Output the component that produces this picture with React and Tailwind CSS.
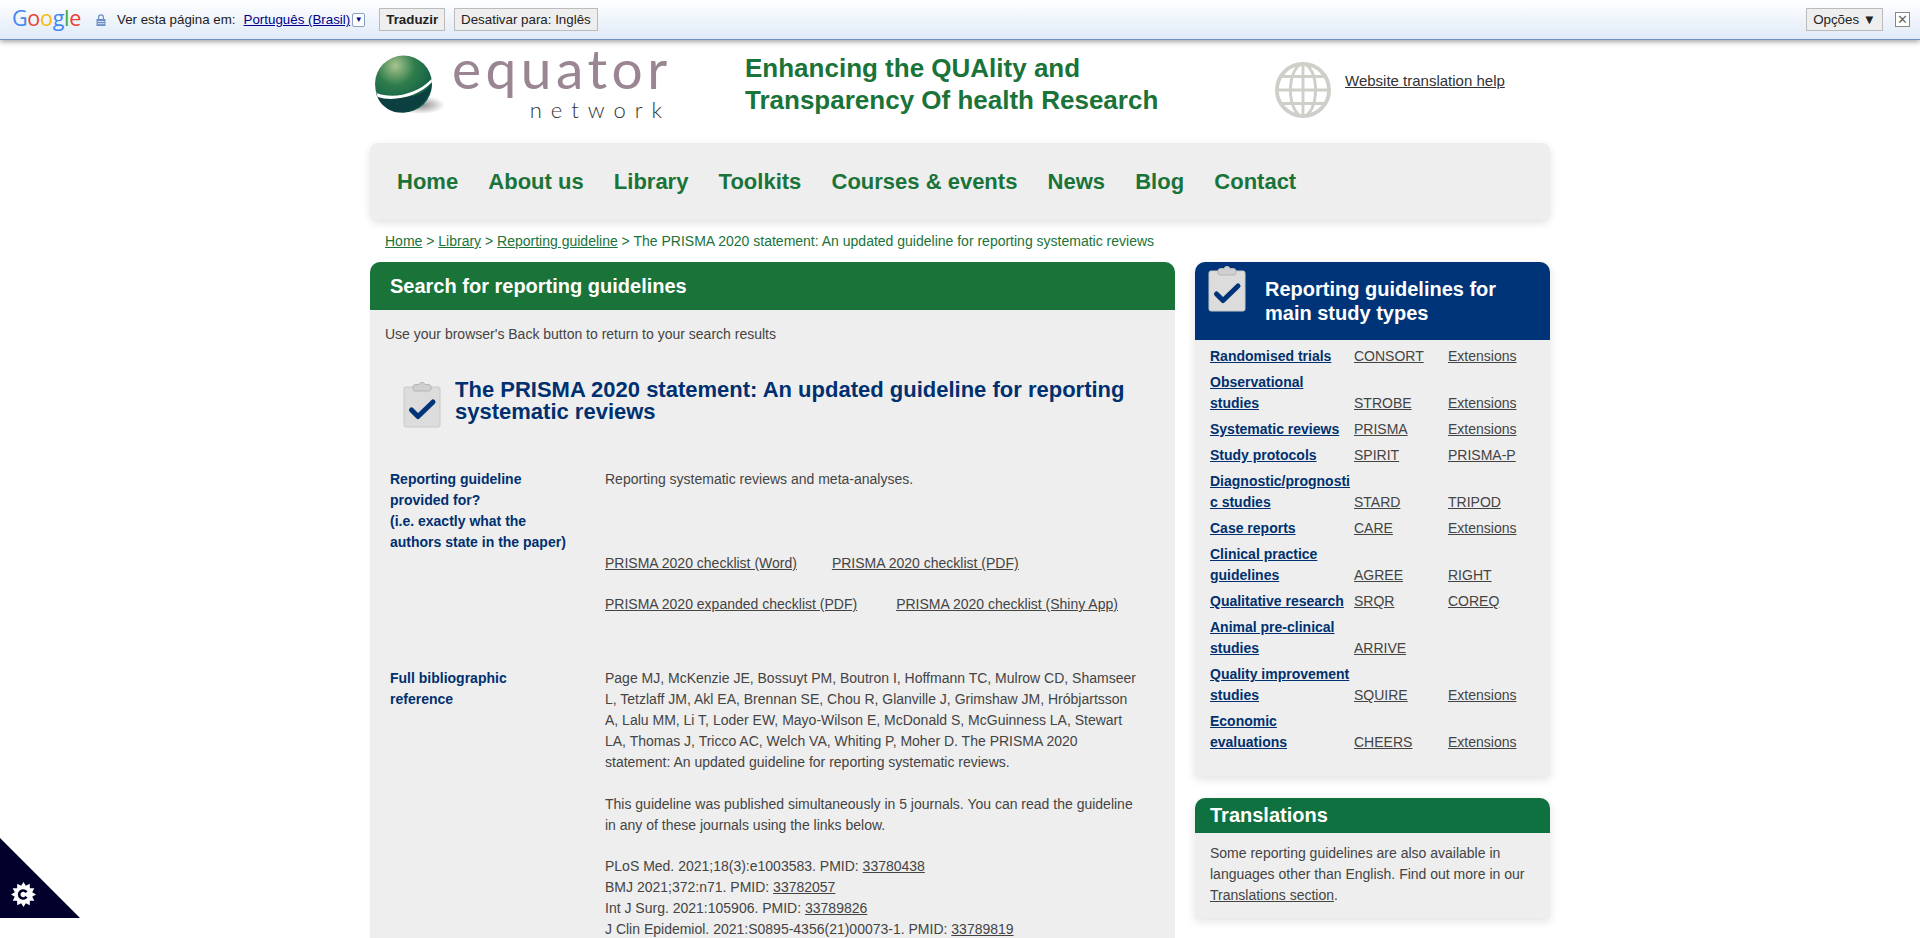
const tipos = [
  { nome: ['Randomised trials'], a: 'CONSORT', b: 'Extensions' },
  { nome: ['Observational', 'studies'], a: 'STROBE', b: 'Extensions' },
  { nome: ['Systematic reviews'], a: 'PRISMA', b: 'Extensions' },
  { nome: ['Study protocols'], a: 'SPIRIT', b: 'PRISMA-P' },
  { nome: ['Diagnostic/prognosti', 'c studies'], a: 'STARD', b: 'TRIPOD' },
  { nome: ['Case reports'], a: 'CARE', b: 'Extensions' },
  { nome: ['Clinical practice', 'guidelines'], a: 'AGREE', b: 'RIGHT' },
  { nome: ['Qualitative research'], a: 'SRQR', b: 'COREQ' },
  { nome: ['Animal pre-clinical', 'studies'], a: 'ARRIVE' },
  { nome: ['Quality improvement', 'studies'], a: 'SQUIRE', b: 'Extensions' },
  { nome: ['Economic', 'evaluations'], a: 'CHEERS', b: 'Extensions' },
]

const menu = ['Home', 'About us', 'Library', 'Toolkits', 'Courses & events', 'News', 'Blog', 'Contact']

function Clipboard({ className, check = '#003478' }) {
  return (
    <svg viewBox="0 0 38 46" className={className}>
      <rect x="1" y="5" width="36" height="40" rx="2" fill="#dcdcdc" stroke="#c9c9c9" />
      <path d="M10 5c0-1.500 1-2.500 3-2.500h3c.5-1.500 1.500-2 3-2s2.500.5 3 2h3c2 0 3 1 3 2.500v2c0 1-1 2-2 2H12c-1 0-2-1-2-2z" fill="#cfcfcf" stroke="#b5b5b5" />
      <path d="M8.500 28l6.500 6.500L30 20" fill="none" stroke={check} strokeWidth="5" strokeLinecap="round" strokeLinejoin="round" />
    </svg>
  )
}

function Globo() {
  return (
    <svg viewBox="0 0 58 58" className="w-[56px] h-[56px]" fill="none" stroke="#cfcfca" strokeWidth="3">
      <circle cx="29" cy="29" r="27" strokeWidth="4" />
      <ellipse cx="29" cy="29" rx="13" ry="27" />
      <path d="M29 2v54M2 29h54M6 15h46M6 43h46" />
    </svg>
  )
}

function Esfera() {
  return (
    <svg viewBox="0 0 72 60" className="w-[72px] h-[60px] shrink-0">
      <defs>
        <radialGradient id="bola" cx="0.36" cy="0.18" r="0.75">
          <stop offset="0" stopColor="#a9c48f" />
          <stop offset="0.45" stopColor="#2f7d4b" />
          <stop offset="1" stopColor="#0d5a48" />
        </radialGradient>
        <radialGradient id="sombra" cx="0.5" cy="0.5" r="0.5">
          <stop offset="0" stopColor="#8a8a8a" />
          <stop offset="1" stopColor="#ffffff" />
        </radialGradient>
      </defs>
      <ellipse cx="46" cy="50" rx="24" ry="9" fill="url(#sombra)" />
      <circle cx="28.500" cy="29" r="28.500" fill="url(#bola)" />
      <path d="M1 38c2 8 8 15 16 18 5 2 13 2 18 0 12-4 20-14 22-27-8 12-30 18-56 9z" fill="#0c3f40" />
      <path d="M1.500 38c16 6 40 2 55-14l.5 3C43 42 19 47 2.500 42z" fill="#ffffff" />
    </svg>
  )
}

function Engrenagem() {
  const pontas = []
  for (let i = 0; i < 24; i++) {
    const r = i % 2 === 0 ? 12.500 : 9
    const ang = (i * Math.PI) / 12
    pontas.push(`${(12.500 + r * Math.cos(ang)).toFixed(2)},${(12.500 + r * Math.sin(ang)).toFixed(2)}`)
  }
  return (
    <svg viewBox="0 0 25 25" className="w-[25px] h-[25px]">
      <polygon points={pontas.join(' ')} fill="#ffffff" />
      <path d="M15.500 10.300a4 4 0 1 0 0 4.400" fill="none" stroke="#00002a" strokeWidth="2.600" />
    </svg>
  )
}

function BarraTradutor() {
  return (
    <div className="h-[40px] flex items-center bg-gradient-to-b from-white to-[#dfeaf7] border-b border-[#6f8fc5] shadow-[0_2px_5px_rgba(0,0,0,0.35)] font-['Liberation_Sans',sans-serif] text-[13.33px] text-[#222] relative z-10">
      <span className="ml-[12px] text-[21.5px] leading-none font-medium tracking-[-0.3px] font-['Open_Sans',sans-serif] w-[70px] -mt-1">
        <span className="text-[#4285f4]">G</span>
        <span className="text-[#ea4335]">o</span>
        <span className="text-[#fbbc05]">o</span>
        <span className="text-[#4285f4]">g</span>
        <span className="text-[#34a853]">l</span>
        <span className="text-[#ea4335]">e</span>
      </span>
      <svg viewBox="0 0 10 12" className="w-[10px] h-[12px] ml-[14px]" fill="#6a8fc8">
        <path d="M2 5V3.200a3 3 0 0 1 6 0V5H6.800V3.200a1.800 1.800 0 0 0-3.600 0V5z" />
        <rect x="0.500" y="5" width="9" height="7" rx="0.500" />
        <path d="M1.500 7.500h7M1.500 9.700h7" stroke="#ffffff" strokeWidth="0.700" />
      </svg>
      <span className="ml-[11px]">Ver esta página em:</span>
      <a className="ml-2 text-[#00008b] underline">Português (Brasil)</a>
      <span className="ml-[2px] w-[13px] h-[14px] border border-[#8aa0c0] rounded-[2px] bg-white text-[#00008b] text-[8px] leading-[12px] text-center">▼</span>
      <button className="ml-[14px] h-[23px] px-[6px] bg-[#eeeeee] border border-[#bbbbbb] font-bold">Traduzir</button>
      <button className="ml-[9px] h-[23px] px-[6px] bg-[#eeeeee] border border-[#bbbbbb]">Desativar para: Inglês</button>
      <button className="ml-auto h-[23px] px-[6px] bg-[#eeeeee] border border-[#bbbbbb]">Opções ▼</button>
      <span className="ml-[12px] mr-[10px] w-[15px] h-[15px] border border-[#888] bg-white text-[#666] text-[13px] leading-[13px] text-center">✕</span>
    </div>
  )
}

function Cabecalho() {
  return (
    <div className="h-[103px] flex">
      <div className="w-[375px] pt-[15px] pl-[5px] flex">
        <Esfera />
        <div className="ml-[5px] -mt-[12px] w-[218px] font-['Lato',sans-serif]">
          <div className="text-[55px] leading-[50px] tracking-[4.500px] text-[#9a8592] whitespace-nowrap">equator</div>
          <div className="text-[22px] leading-[22px] tracking-[9px] text-right font-light text-[#333] mt-[6px] -mr-[1px] whitespace-nowrap">network</div>
        </div>
      </div>
      <div className="w-[530px] pt-[12px] text-[26px] leading-[32px] font-bold text-[#1a7339]">
        Enhancing the QUAlity and<br />Transparency Of health Research
      </div>
      <div className="pt-[22px] flex">
        <Globo />
        <a className="ml-[14px] mt-[9px] text-[15px] leading-[20px] underline text-[#333]">Website translation help</a>
      </div>
    </div>
  )
}

function PainelGuia() {
  return (
    <div className="w-[805px] bg-[#eeeeee] rounded-t-[10px]">
      <div className="h-[48px] bg-[#1a7339] rounded-t-[10px] pl-5 flex items-center text-[20px] font-bold text-white">
        Search for reporting guidelines
      </div>
      <p className="pl-[15px] pt-[14px] leading-[21px]">Use your browser's Back button to return to your search results</p>
      <div className="mt-[34px] pl-[33px] flex items-start">
        <Clipboard className="w-[38px] h-[46px] mt-[3px] shrink-0" />
        <h1 className="ml-[14px] text-[22px] leading-[22px] font-bold text-[#00306f]">
          The PRISMA 2020 statement: An updated guideline for reporting systematic reviews
        </h1>
      </div>
      <div className="mt-[41px] pl-5 flex">
        <div className="w-[215px] shrink-0 font-bold text-[#00306f]">
          Reporting guideline<br />provided for?<br />(i.e. exactly what the<br />authors state in the paper)
        </div>
        <div className="w-[535px]">
          <p>Reporting systematic reviews and meta-analyses.</p>
          <div className="mt-[63px] flex gap-[35px] underline">
            <a>PRISMA 2020 checklist (Word)</a>
            <a>PRISMA 2020 checklist (PDF)</a>
          </div>
          <div className="mt-[20px] flex gap-[39px] underline">
            <a>PRISMA 2020 expanded checklist (PDF)</a>
            <a>PRISMA 2020 checklist (Shiny App)</a>
          </div>
        </div>
      </div>
      <div className="mt-[53px] pl-5 flex">
        <div className="w-[215px] shrink-0 font-bold text-[#00306f]">
          Full bibliographic<br />reference
        </div>
        <div className="w-[535px]">
          <p>Page MJ, McKenzie JE, Bossuyt PM, Boutron I, Hoffmann TC, Mulrow CD, Shamseer L, Tetzlaff JM, Akl EA, Brennan SE, Chou R, Glanville J, Grimshaw JM, Hróbjartsson A, Lalu MM, Li T, Loder EW, Mayo-Wilson E, McDonald S, McGuinness LA, Stewart LA, Thomas J, Tricco AC, Welch VA, Whiting P, Moher D. The PRISMA 2020 statement: An updated guideline for reporting systematic reviews.</p>
          <p className="mt-[21px]">This guideline was published simultaneously in 5 journals. You can read the guideline in any of these journals using the links below.</p>
          <p className="mt-[20px]">PLoS Med. 2021;18(3):e1003583. PMID: <a className="underline">33780438</a></p>
          <p>BMJ 2021;372:n71. PMID: <a className="underline">33782057</a></p>
          <p>Int J Surg. 2021:105906. PMID: <a className="underline">33789826</a></p>
          <p>J Clin Epidemiol. 2021:S0895-4356(21)00073-1. PMID: <a className="underline">33789819</a></p>
        </div>
      </div>
    </div>
  )
}

function Lateral() {
  return (
    <div className="w-[355px]">
      <div className="bg-[#eeeeee] rounded-t-[10px] pb-[23px] shadow-[0_3px_10px_rgba(0,0,0,0.12)]">
        <div className="h-[78px] bg-[#003478] rounded-t-[10px] flex text-white">
          <Clipboard className="w-[38px] h-[46px] ml-[13px] mt-[4px] shrink-0" />
          <div className="ml-[19px] mt-[15px] text-[20px] leading-[24px] font-bold">Reporting guidelines for<br />main study types</div>
        </div>
        <div className="pt-[6px] pl-[15px] grid grid-cols-[144px_94px_auto] gap-y-[5px] items-end">
          {tipos.map(t => (
            <div key={t.nome[0]} className="contents">
              <a className="font-bold text-[#00306f] underline whitespace-nowrap">
                {t.nome.map(n => <div key={n}>{n}</div>)}
              </a>
              <a className="underline">{t.a}</a>
              <a className="underline">{t.b}</a>
            </div>
          ))}
        </div>
      </div>
      <div className="mt-[22px] bg-[#eeeeee] rounded-t-[10px] pb-[12px] shadow-[0_3px_10px_rgba(0,0,0,0.12)]">
        <div className="h-[35px] bg-[#0f7040] rounded-t-[10px] pl-[15px] flex items-center text-[20px] font-bold text-white">Translations</div>
        <p className="pt-[10px] px-[15px]">Some reporting guidelines are also available in languages other than English. Find out more in our <a className="underline">Translations section</a>.</p>
      </div>
    </div>
  )
}

export default function App() {
  return (
    <div className="relative h-[938px] overflow-hidden bg-white font-['Liberation_Sans',Arial,sans-serif] text-[14px] leading-[21px] text-[#444]">
      <BarraTradutor />
      <div className="w-[1180px] ml-[370px]">
        <Cabecalho />
        <nav className="h-[77px] bg-[#eeeeee] rounded-[8px] shadow-[0_3px_8px_rgba(0,0,0,0.12)] pl-[27px] flex items-center gap-[30.2px] text-[22px] font-bold text-[#1a7339]">
          {menu.map(m => <a key={m}>{m}</a>)}
        </nav>
        <div className="pl-[15px] pt-[11px] h-[42px] text-[#1a7339]">
          <a className="underline">Home</a> &gt; <a className="underline">Library</a> &gt; <a className="underline">Reporting guideline</a> &gt; The PRISMA 2020 statement: An updated guideline for reporting systematic reviews
        </div>
        <div className="flex gap-5 items-start">
          <PainelGuia />
          <Lateral />
        </div>
      </div>
      <div className="absolute left-0 top-[838px] w-[80px] h-[80px] bg-[#00002a] [clip-path:polygon(0_0,100%_100%,0_100%)]">
        <div className="absolute left-[11px] top-[44px]"><Engrenagem /></div>
      </div>
    </div>
  )
}
